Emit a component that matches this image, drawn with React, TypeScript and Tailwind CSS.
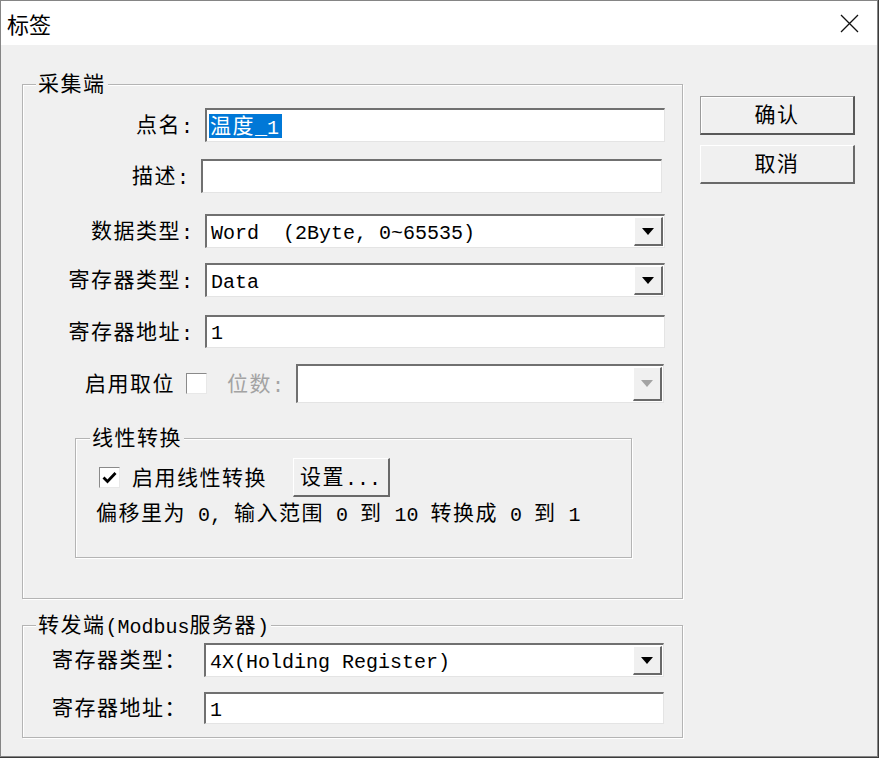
import type { ReactNode } from 'react'

const CJK = /([\u2e80-\u9fff\u3000-\u303f\uff00-\uffef]+)/

// SimSun-like rhythm: full-width glyphs ~22.5px, half-width ~12px
function T({ s }: { s: string }) {
  const mixed = CJK.test(s)
  return (
    <span
      className={
        mixed
          ? 'inline-flex items-baseline align-top h-[24px] whitespace-pre'
          : 'inline-flex items-baseline align-top h-[24px] whitespace-pre translate-y-[3px]'
      }
    >
      {s
        .split(CJK)
        .filter(Boolean)
        .map((p, i) =>
          CJK.test(p) ? (
            <span
              key={i}
              className="font-['Noto_Sans_CJK_SC',sans-serif] text-[21px] leading-[24px] tracking-[1.5px] -translate-y-[2px]"
            >
              {p}
            </span>
          ) : (
            <span key={i} className="font-['Liberation_Mono',monospace] text-[20px] leading-[24px] -translate-y-[1px]">
              {p}
            </span>
          ),
        )}
    </span>
  )
}

const sunken =
  'bg-white border-t-2 border-l-2 border-t-[#707070] border-l-[#707070] border-r border-b border-r-[#e4e4e4] border-b-[#e4e4e4]'
const raised =
  'bg-[#f0f0f0] border-t border-l border-t-white border-l-white border-r-2 border-b-2 border-r-[#696969] border-b-[#696969]'
const group =
  'border border-[#b4b4b4] shadow-[inset_1px_1px_0_#fff,1px_1px_0_#fff]'

const Arrow = ({ disabled }: { disabled?: boolean }) => (
  <div className={`${raised} w-[29px] my-[1px] mr-[1px] flex items-center justify-center`}>
    <svg width="12" height="7" viewBox="0 0 12 7">
      <path d="M0 0H12L6 7Z" fill={disabled ? '#a3a3a3' : '#000'} />
    </svg>
  </div>
)

const Select = ({ value, className, disabled }: { value: string; className: string; disabled?: boolean }) => (
  <div className={`${sunken} flex items-stretch ${className}`}>
    <div className="flex-1 flex items-center pl-[4px] text-black">
      <T s={value} />
    </div>
    <Arrow disabled={disabled} />
  </div>
)

const Input = ({ children, className }: { children?: ReactNode; className: string }) => (
  <div className={`${sunken} flex items-center text-black ${className}`}>{children}</div>
)

const Checkbox = ({ checked, className }: { checked?: boolean; className?: string }) => (
  <div
    className={`w-[21px] h-[21px] bg-white border-t border-l border-t-[#8a8a8a] border-l-[#8a8a8a] border-r border-b border-r-[#e8e8e8] border-b-[#e8e8e8] flex items-center justify-center ${className ?? ''}`}
  >
    {checked && (
      <svg width="15" height="13" viewBox="0 0 15 13">
        <path d="M1.5 6.5L5.5 10.5L13.5 2" stroke="#000" strokeWidth="2.8" fill="none" />
      </svg>
    )}
  </div>
)

export default function App() {
  return (
    <div className="w-[879px] h-[758px] bg-[#3b3b3b] leading-[24px]">
      <div className="w-[878px] h-[757px] border border-[#858585] flex flex-col bg-[#f0f0f0] text-black">
        <div className="h-[44px] bg-white flex items-center justify-between">
          <span className="pl-[6px] font-['Noto_Sans_CJK_SC',sans-serif] text-[22px] leading-[24px]">标签</span>
          <svg className="mr-[18px]" width="19" height="19" viewBox="0 0 19 19">
            <path d="M1 1L18 18M18 1L1 18" stroke="#111" strokeWidth="1.3" />
          </svg>
        </div>

        <div className="flex-1 flex items-start pl-[21px] pt-[27px] gap-[17px]">
          <div className="flex flex-col w-[661px]">
            <fieldset className={`${group} pb-[40px]`}>
              <legend className="ml-[13px] px-[2px] bg-[#f0f0f0]">
                <T s="采集端" />
              </legend>

              <div className="mt-[12px] flex items-center">
                <div className="w-[170px] text-right">
                  <T s="点名:" />
                </div>
                <Input className="ml-[12px] w-[460px] h-[34px] pl-[2px]">
                  <span className="bg-[#0078d7] text-white pl-[1px] pr-[3px] flex">
                    <T s="温度_1" />
                  </span>
                </Input>
              </div>

              <div className="mt-[17px] flex items-center">
                <div className="w-[166px] text-right">
                  <T s="描述:" />
                </div>
                <Input className="ml-[12px] w-[461px] h-[34px]" />
              </div>

              <div className="mt-[21px] flex items-center">
                <div className="w-[170px] text-right">
                  <T s="数据类型:" />
                </div>
                <Select value="Word  (2Byte, 0~65535)" className="ml-[12px] w-[460px] h-[34px]" />
              </div>

              <div className="mt-[15px] flex items-center">
                <div className="w-[170px] text-right">
                  <T s="寄存器类型:" />
                </div>
                <Select value="Data" className="ml-[12px] w-[460px] h-[34px]" />
              </div>

              <div className="mt-[18px] flex items-center">
                <div className="w-[170px] text-right">
                  <T s="寄存器地址:" />
                </div>
                <Input className="ml-[12px] w-[460px] h-[33px] pl-[4px]">
                  <T s="1" />
                </Input>
              </div>

              <div className="mt-[16px] flex items-center">
                <div className="w-[152px] text-right">
                  <T s="启用取位" />
                </div>
                <Checkbox className="ml-[11px]" />
                <div className="ml-[20px] text-[#a3a3a3]">
                  <T s="位数:" />
                </div>
                <Select value="" disabled className="ml-[12px] w-[368px] h-[39px]" />
              </div>

              <fieldset className={`${group} mt-[23px] ml-[52px] w-[557px] pb-[32px]`}>
                <legend className="ml-[14px] px-[2px] bg-[#f0f0f0]">
                  <T s="线性转换" />
                </legend>
                <div className="mt-[8px] flex items-center pl-[23px]">
                  <Checkbox checked />
                  <div className="ml-[12px]">
                    <T s="启用线性转换" />
                  </div>
                  <div className={`${raised} ml-[26px] w-[97px] h-[39px] flex items-center pl-[6px]`}>
                    <T s="设置..." />
                  </div>
                </div>
                <div className="mt-[4px] pl-[20px]">
                  <T s="偏移里为 0, 输入范围 0 到 10 转换成 0 到 1" />
                </div>
              </fieldset>
            </fieldset>

            <fieldset className={`${group} mt-[14px] pb-[13px]`}>
              <legend className="ml-[13px] px-[2px] bg-[#f0f0f0]">
                <T s="转发端(Modbus服务器)" />
              </legend>
              <div className="mt-[6px] flex items-center">
                <div className="w-[181px] pl-[29px]">
                  <T s="寄存器类型：" />
                </div>
                <Select value="4X(Holding Register)" className="w-[460px] h-[34px]" />
              </div>
              <div className="mt-[15px] flex items-center">
                <div className="w-[181px] pl-[29px]">
                  <T s="寄存器地址：" />
                </div>
                <Input className="w-[460px] h-[32px] pl-[4px]">
                  <T s="1" />
                </Input>
              </div>
            </fieldset>
          </div>

          <div className="mt-[24px] flex flex-col gap-[10px]">
            <div className="w-[155px] h-[39px] bg-[#f0f0f0] border-t border-l border-t-[#9a9a9a] border-l-[#9a9a9a] border-r-2 border-b-2 border-r-[#595959] border-b-[#595959] shadow-[inset_1px_1px_0_#fff] flex items-center justify-center">
              <T s="确认" />
            </div>
            <div className={`${raised} w-[155px] h-[39px] flex items-center justify-center`}>
              <T s="取消" />
            </div>
          </div>
        </div>
      </div>
    </div>
  )
}
